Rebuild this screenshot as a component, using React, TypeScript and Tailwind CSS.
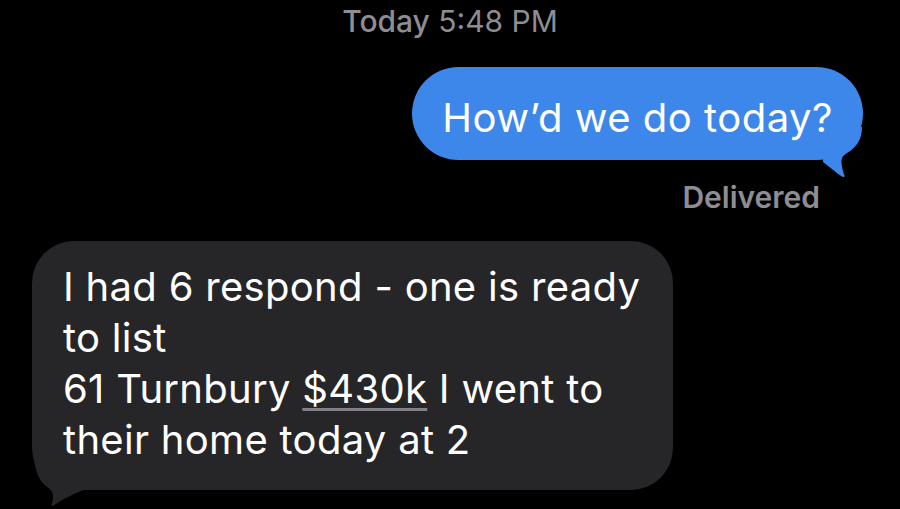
export default function App() {
  return (
    <div
      className="flex h-[509px] w-[900px] flex-col overflow-hidden bg-black"
      style={{ fontFamily: "Inter, 'Noto Sans', sans-serif" }}
    >
      <div className="pt-[4px] text-center text-[30px] leading-[34px] text-[#8d8d92]">
        <span className="font-medium">Today</span> <span>5:48 PM</span>
      </div>

      <div className="mt-[29px] flex justify-end pr-[37px]">
        <div className="relative">
          {/* tail */}
          <svg
            className="absolute bottom-[-17px] right-0"
            width="40"
            height="50"
            viewBox="0 0 40 50"
          >
            <path
              d="M39 0 C39 12 34 20 24 26 C20 28.5 18 31 18.5 36 C19 41 20 45 21.5 48.5 C22 50 20.5 50.5 19 49.5 C13 46 7 40 0 35 L0 0 Z"
              fill="#3d87ea"
            />
          </svg>
          <div className="relative rounded-[47px] bg-[#3d87ea] pl-[30px] pr-[30px] pt-[27px] pb-[19px] text-[40px] leading-[47px] tracking-[0.5px] text-white">
            How’d we do today?
          </div>
        </div>
      </div>

      <div className="mt-[20px] pr-[80px] text-right text-[30px] font-semibold leading-[34px] text-[#8d8d92]">
        Delivered
      </div>

      <div className="mt-[27px] flex pl-[32px]">
        <div className="relative">
          {/* tail */}
          <svg
            className="absolute bottom-[-16px] left-0"
            width="60"
            height="62"
            viewBox="0 0 60 62"
          >
            <path
              d="M1 0 C1 22 6 36 14 42 C19 45.5 21 48 21 52 C21 55 20.5 58 19.5 60.5 C19 62 21 62 22.5 61 C30 56 40 50 52 46 L60 46 L60 0 Z"
              fill="#262628"
            />
          </svg>
          <div className="relative w-[641px] rounded-[42px] bg-[#262628] pl-[31px] pr-[20px] pt-[20px] pb-[25px] text-[40px] leading-[51px] tracking-[0.3px] text-white">
            I had 6 respond - one is ready
            <br />
            to list
            <br />
            61 Turnbury{" "}
            <span className="underline decoration-[#808085] decoration-[2.5px] underline-offset-[5px]">$430k</span> I went
            to
            <br />
            their home today at 2
          </div>
        </div>
      </div>
    </div>
  );
}
